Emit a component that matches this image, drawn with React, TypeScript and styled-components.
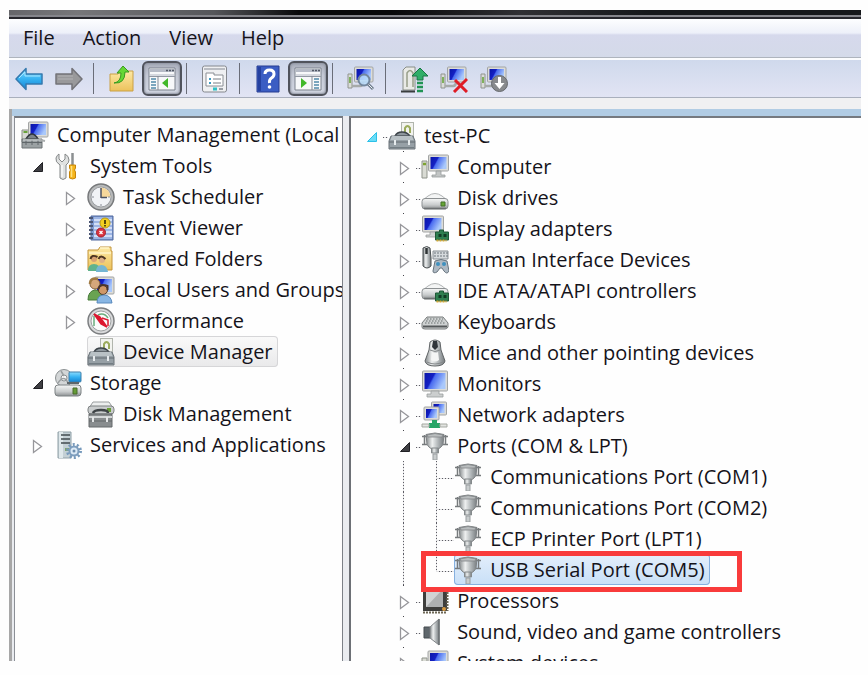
import React from "react";
import styled, { createGlobalStyle, css } from "styled-components";

const Global = createGlobalStyle`
  *, *::before, *::after { box-sizing: border-box; }
  body { margin: 0; background: #fefefe; }
  button { font: inherit; color: inherit; border: 0; background: none; padding: 0; margin: 0; }
`;

/* ---------- layout ---------- */

const Page = styled.main`
  height: 100vh;
  padding: 10px 7px 14px 9px;
  font-family: "Open Sans", "Noto Sans", sans-serif;
  font-size: 20px;
  line-height: 30px;
  color: #15131a;
`;

const Frame = styled.div`
  height: 100%;
  display: flex;
  flex-direction: column;
  overflow: hidden;
  background: #f0f0f2;
`;

const TitleEdge = styled.div`
  flex: none;
  height: 9px;
  background:
    linear-gradient(to bottom, transparent 5px, #85858b 5px, #85858b 7px, #26262c 7px),
    linear-gradient(to right, #66666a 0%, #77777a 8%, #55565a 24%, #08080a 34%, #08080a 45%, #303034 60%, #15171a 75%, #15171a 100%);
`;

const MenuBar = styled.nav`
  flex: none;
  display: flex;
  align-items: center;
  height: 39px;
  background: linear-gradient(to bottom, #fdfeff 0, #edf0f9 14px, #d6d9ec 16px, #d4dae9 100%);
  border-bottom: 1px solid #aeb4bd;
`;

const MenuButton = styled.button`
  padding: 0 14px;
  height: 30px;
`;

const ToolBar = styled.div`
  flex: none;
  display: flex;
  align-items: center;
  height: 40px;
  background: linear-gradient(to bottom, #fbfcfe 2px, #cfd9ec 2px, #e2e4f4 100%);
  border-bottom: 1px solid #a9afbd;
`;

const ToolButton = styled.button<{ $pressed?: boolean }>`
  flex: none;
  width: 40px;
  height: 35px;
  margin-top: 2px;
  display: grid;
  place-items: center;
  ${(p) =>
    p.$pressed &&
    css`
      border: 2px solid #50535c;
      border-radius: 6px;
      background: linear-gradient(to bottom, #a6abb8, #c6cad6 40%, #d3d7e3);
      box-shadow: inset 0 0 2px 1px #9197a5;
    `}
`;

const Separator = styled.span`
  flex: none;
  width: 1px;
  height: 31px;
  margin: 2px 8px 0 4px;
  background: #6a6d78;
`;

const Body = styled.div`
  flex: 1;
  min-height: 0;
  display: flex;
  gap: 6px;
  margin-top: 11px;
  padding: 7px 0 0 5px;
  border-left: 3px solid #a7a7a7;
  background: linear-gradient(to bottom, #b1cce4 7px, #eaecf0 7px);
`;

const Pane = styled.section<{ $side: "left" | "right" }>`
  overflow: hidden;
  background: #fefefe;
  border-top: 2px solid #75797f;
  ${(p) =>
    p.$side === "left"
      ? css`
          flex: 0 0 39%;
          margin-left: -3px;
          padding-left: 6px;
          border-left: 1px solid #8b8f96;
          border-right: 1px solid #7c8087;
        `
      : css`
          flex: 1;
          padding: 1px 0 0 4px;
          border-left: 2px solid #6d7076;
        `}
`;

/* ---------- tree ---------- */

const Tree = styled.ul`
  list-style: none;
  margin: 0;
  padding: 1px 0 0;
`;

const Row = styled.li`
  display: flex;
  height: 31px;
  white-space: nowrap;
`;

const dotsDown = "repeating-linear-gradient(to bottom, #5c5c64 0 1px, #e4e4e6 1px 3px)";
const dotsAcross = "repeating-linear-gradient(to right, #5c5c64 0 1px, #e4e4e6 1px 3px)";

type GuideKind = "none" | "line" | "last" | "branch" | "node" | "stub";

const Guide = styled.span<{ $kind: GuideKind }>`
  flex: none;
  width: 33px;
  height: 31px;
  display: flex;
  align-items: center;
  padding: 3px 0 0 11px;
  background-repeat: no-repeat;
  ${(p) => p.$kind === "line" && css`
    background-image: ${dotsDown};
    background-size: 1px 100%;
    background-position: 15px 0;
  `}
  ${(p) => p.$kind === "branch" && css`
    background-image: ${dotsDown}, ${dotsAcross};
    background-size: 1px 100%, 18px 1px;
    background-position: 15px 0, 15px 17px;
  `}
  ${(p) => p.$kind === "last" && css`
    background-image: ${dotsDown}, ${dotsAcross};
    background-size: 1px 18px, 18px 1px;
    background-position: 15px 0, 15px 17px;
  `}
  ${(p) => p.$kind === "node" && css`
    background-image: linear-gradient(#44444a, #44444a), ${dotsAcross};
    background-size: 1px 1px, 5px 1px;
    background-position: 15px 0, 28px 17px;
  `}
  ${(p) => p.$kind === "stub" && css`
    background-image: ${dotsAcross};
    background-size: 5px 1px;
    background-position: 28px 17px;
  `}
`;

const Expander = styled.button`
  width: 12px;
  height: 15px;
  display: grid;
  place-items: center;
`;

const Item = styled.button<{ $state?: "idle" | "active" }>`
  position: relative;
  display: flex;
  align-items: center;
  gap: 8px;
  height: 31px;
  padding-right: 5px;
  border-radius: 4px;
  ${(p) => p.$state === "idle" && css`
    box-shadow: inset 0 0 0 1px #d6d6d8;
    background: linear-gradient(to bottom, #fafafa, #e9e9ea);
  `}
  ${(p) => p.$state === "active" && css`
    box-shadow: inset 0 0 0 1px #86b0df;
    background: linear-gradient(to bottom, #e4effb, #c8dff7);
  `}
`;

const Highlight = styled.span`
  position: absolute;
  z-index: 1;
  inset: -3px -32px -7px -33px;
  border: 5px solid #f93b3b;
  pointer-events: none;
`;

/* ---------- icons ---------- */

const Svg = ({ children, w = 28, h = 28 }: { children: React.ReactNode; w?: number; h?: number }) => (
  <svg width={w} height={h} viewBox={`0 0 ${w} ${h}`} fill="none" aria-hidden="true">
    {children}
  </svg>
);

const Paints = styled.svg`
  position: absolute;
`;

const Defs = () => (
  <Paints width="0" height="0" aria-hidden="true">
    <defs>
      <linearGradient id="screen" x1="0" y1="0" x2="1" y2="0.4">
        <stop offset="0" stopColor="#0a16a8" />
        <stop offset="0.42" stopColor="#1420c4" />
        <stop offset="0.5" stopColor="#4a6cf0" />
        <stop offset="1" stopColor="#a9c8fb" />
      </linearGradient>
      <linearGradient id="steel" x1="0" y1="0" x2="1" y2="0">
        <stop offset="0" stopColor="#83888a" />
        <stop offset="0.35" stopColor="#eef0f0" />
        <stop offset="0.65" stopColor="#b4b9bb" />
        <stop offset="1" stopColor="#777c7f" />
      </linearGradient>
      <linearGradient id="metal" x1="0" y1="0" x2="0" y2="1">
        <stop offset="0" stopColor="#f6f7f7" />
        <stop offset="0.6" stopColor="#c9cccd" />
        <stop offset="1" stopColor="#8c9092" />
      </linearGradient>
      <linearGradient id="blue" x1="0" y1="0" x2="0" y2="1">
        <stop offset="0" stopColor="#8bdcff" />
        <stop offset="0.5" stopColor="#35b2f2" />
        <stop offset="1" stopColor="#1583d2" />
      </linearGradient>
      <linearGradient id="folder" x1="0" y1="0" x2="0" y2="1">
        <stop offset="0" stopColor="#fde9a4" />
        <stop offset="1" stopColor="#ecc25c" />
      </linearGradient>
    </defs>
  </Paints>
);

const Screen = ({ x, y, w, h }: { x: number; y: number; w: number; h: number }) => (
  <g>
    <rect x={x} y={y} width={w} height={h} rx="1" fill="#dcdcd8" stroke="#a2a4a4" />
    <rect x={x + 2} y={y + 2} width={w - 4} height={h - 4} fill="url(#screen)" />
  </g>
);

const Card = ({ x, y }: { x: number; y: number }) => (
  <g>
    <path d={`M${x} ${y + 2}h4v-2h4v2h5v8h-13z`} fill="#2f7f50" stroke="#1f5937" />
    <path d={`M${x + 3} ${y + 4}h3v3h-3zM${x + 8} ${y + 4}h3v3h-3z`} fill="#113a24" />
    <path d={`M${x + 1} ${y + 10.5}h10`} stroke="#d6a935" strokeWidth="2" strokeDasharray="2 1" />
  </g>
);

const Toolbox = () => (
  <>
    <rect x="13.5" y="0.5" width="12" height="14" fill="#f2f3ef" stroke="#b1b5ad" />
    <path d="M17 11V6q2.500-4 5 0v5" stroke="#9bab5c" strokeWidth="2" />
    <path d="M7 14q2-4 7-4t8 4z" fill="#8d969c" stroke="#3c4348" strokeWidth="1.5" />
    <path d="M3 14h22l2 5v8H1v-8z" fill="#97a0a6" stroke="#6a7379" />
    <path d="M4 14h20l1.500 4h-23z" fill="#b9c1c5" />
    <path d="M1 20h26" stroke="#626b71" />
    <path d="M7 18v5M21 18v5" stroke="#e7ebed" strokeWidth="2" />
    <path d="M2 25.500h24" stroke="#737d83" />
  </>
);

const Plug = () => (
  <>
    <path d="M3.500 3v9M1 4.500h5M1 12.500h5M24.500 3v9M22 4.500h5M22 12.500h5" stroke="#777b7d" strokeWidth="1.5" />
    <path d="M5 2.500q9-3 18 0l-1 10q-2 3-4 4h-8q-2-1-4-4z" fill="url(#steel)" stroke="#7e8284" />
    <path d="M6 3q8-3 16 0l-1 2H7z" fill="#b9bdbe" stroke="#808486" strokeWidth=".8" />
    <path d="M10.500 16h7v5h-7z" fill="url(#steel)" stroke="#858a8c" />
    <path d="M12 22h4v6h-4z" fill="#c9cdce" stroke="#999ea0" />
  </>
);

const Drive = ({ y = 0 }: { y?: number }) => (
  <g transform={`translate(0 ${y})`}>
    <path d="M7 7q7-5 14 0l5 4H2z" fill="#f4f5f5" stroke="#b1b4b5" />
    <rect x="1" y="9.5" width="26" height="10.5" rx="3" fill="url(#metal)" stroke="#8c9092" />
    <path d="M3 19.500h22" stroke="#6d7173" strokeWidth="1.5" />
  </g>
);

const art: Record<string, React.ReactNode> = {
  computerMgmt: (
    <>
      <path d="M1 9h7v12H1z" fill="#d6d8d3" stroke="#8b8f88" />
      <path d="M2.500 11h4" stroke="#69a23a" strokeWidth="2" />
      <Screen x={7.5} y={1} w={19.5} h={15} />
      <path d="M5 18q3-5 6-5t6 5z" fill="#7c8489" stroke="#31363b" strokeWidth="1.5" />
      <path d="M1 18h20v9H1z" fill="#9ba1a3" stroke="#6c7274" />
      <path d="M1 21.500h20M5 19v5M11 19v5M17 19v5" stroke="#60676a" />
      <path d="M2 19h18" stroke="#d7dcdd" />
      <path d="M19 19l5 1" stroke="#a9adae" strokeWidth="2" />
    </>
  ),
  tools: (
    <>
      <path d="M4 2v5l3 3 3-3V2q4 2 4 6 0 3-3 5v13q-3 3-6 0V13Q0 10 1 6q1-3 3-4z" transform="translate(1 0)" fill="#dfe1e1" stroke="#858889" />
      <path d="M8 13v12" stroke="#f8f8f8" strokeWidth="1.5" />
      <path d="M18.500 1v12" stroke="#8b8f91" strokeWidth="2.5" />
      <path d="M15.500 13h6v3l-1 2 1 2v6q-3 2-6 0v-6l1-2-1-2z" fill="#f5b51c" stroke="#c78509" />
      <path d="M17.500 14v11" stroke="#ffe180" strokeWidth="1.5" />
    </>
  ),
  clock: (
    <>
      <circle cx="14" cy="14" r="13" fill="#b8babb" stroke="#77797b" strokeWidth="1.5" />
      <circle cx="14" cy="14" r="10" fill="#f1f3f6" stroke="#9b9ea2" />
      <path d="M14 14V4.500a9.500 9.500 0 0 1 9.500 9.500z" fill="#f6d79a" />
      <path d="M14 5v10M14 14.500h6" stroke="#4c5262" strokeWidth="1.5" />
      <path d="M14 21v2M5 14h2M21 14h2" stroke="#888c95" />
    </>
  ),
  event: (
    <>
      <path d="M4 2h22v24H4z" fill="#7f9bd2" stroke="#4e669c" />
      <path d="M7 3h18v22H7z" fill="#9db5e4" />
      <path d="M7 6h18M7 10h18M7 14h18M7 18h18M7 22h18" stroke="#e4ecfb" strokeWidth="1.5" />
      <path d="M2 4h4M2 8h4M2 12h4M2 16h4M2 20h4M2 24h4" stroke="#4b5674" strokeWidth="1.8" />
      <circle cx="18" cy="9" r="5" fill="#f2cf21" stroke="#b99a12" />
      <path d="M18 6v4M18 11v1.500" stroke="#473d0a" strokeWidth="1.8" />
      <circle cx="14" cy="18.5" r="4.5" fill="#d93340" stroke="#a51f2c" />
      <path d="M12.500 17l3 3M15.500 17l-3 3" stroke="#fff" strokeWidth="1.3" />
    </>
  ),
  shared: (
    <>
      <path d="M1 5h10l2-3h11v4h1v19H1z" fill="url(#folder)" stroke="#c4953b" />
      <path d="M13 3h9M2 8h22" stroke="#fff5c9" strokeWidth="1.5" />
      <circle cx="7" cy="14" r="3" fill="#d7a273" />
      <path d="M3.500 14q1-5 7-2" stroke="#4d3522" strokeWidth="2" />
      <path d="M1 26q0-7 6-7t6 7z" fill="#5fb38d" />
      <circle cx="15" cy="15" r="3" fill="#dfb187" />
      <path d="M11.500 14q2-5 7 0" stroke="#4d3522" strokeWidth="2" />
      <path d="M9 27q0-7 5.500-7t6.500 7z" fill="#75b6d3" />
    </>
  ),
  users: (
    <>
      <Screen x={8} y={1} w={19} h={17} />
      <circle cx="8" cy="8" r="5" fill="#d6a77b" stroke="#85603d" />
      <path d="M3 8q0-7 8-5" stroke="#a17b43" strokeWidth="2.5" />
      <path d="M1 24q0-9 7-10 7 0 8 10z" fill="#69a352" stroke="#477b39" />
      <circle cx="16" cy="14" r="4.5" fill="#cf9868" stroke="#533726" />
      <path d="M11.500 13q1-6 9-3v4" stroke="#4b352b" strokeWidth="2" />
      <path d="M10 27q0-8 7-8t8 8z" fill="#88b6e4" stroke="#5a8abd" />
    </>
  ),
  perf: (
    <>
      <circle cx="14" cy="14" r="13" fill="#d9dadb" stroke="#7c7e80" strokeWidth="1.5" />
      <circle cx="14" cy="14" r="10" fill="#fbfbfb" stroke="#9c9fa0" />
      <path d="M7 19V9M11 8q6-3 10 3" stroke="#6bad7d" strokeWidth="1.5" />
      <path d="M7 7l6 3 7 10-6-3z" fill="#dc1830" stroke="#dc1830" strokeWidth="1.5" />
      <path d="M15 11l6 2v6" stroke="#dc1830" strokeWidth="1.5" />
    </>
  ),
  toolbox: <Toolbox />,
  storage: (
    <>
      <circle cx="10" cy="9" r="8.5" fill="#d3d6d7" stroke="#8b9092" />
      <circle cx="10" cy="9" r="3" fill="#f8f8f8" stroke="#8b9092" />
      <path d="M4 14q6-9 10 0M7 2l3 5" stroke="#9a9fa1" strokeWidth="1.5" />
      <rect x="15" y="3" width="12" height="10" rx="1" fill="url(#blue)" stroke="#3e7fa9" />
      <path d="M13 14h12" stroke="#5e666a" strokeWidth="2" />
      <rect x="1" y="16" width="26" height="11" rx="3" fill="url(#metal)" stroke="#7d8284" />
      <path d="M19 19h4v6h-4z" fill="#659d36" stroke="#49692c" />
    </>
  ),
  disk: (
    <>
      <path d="M6 2h16l4 6H2z" fill="#eceeee" stroke="#9a9e9f" />
      <rect x="1" y="6" width="26" height="8" rx="3" fill="#c9cccd" stroke="#7e8283" />
      <path d="M20 8h4v4h-4z" fill="#6c9e38" />
      <path d="M2 14h23v13H2z" fill="#898d8f" stroke="#64686a" />
      <path d="M6 13q1-3 8-3t7 3" stroke="#3e4346" strokeWidth="2.5" />
      <path d="M2 17h23" stroke="#d4d7d8" strokeWidth="2" />
      <path d="M2 21h23" stroke="#64686a" />
      <path d="M6 17v5M20 17v5" stroke="#e4e6e7" strokeWidth="2" />
    </>
  ),
  services: (
    <>
      <path d="M4 1h13v26H4z" fill="#c4d0d5" stroke="#90a0a7" />
      <path d="M5 1h4v26H5z" fill="#dfe8eb" />
      <path d="M7 4h9M7 8h9M7 12h9" stroke="#414b50" strokeWidth="1.5" />
      <path d="M11 17h4v3h-4z" fill="#7fa56e" />
      <circle cx="20" cy="20" r="6.5" stroke="#779abc" strokeWidth="3" strokeDasharray="2 2.080" />
      <circle cx="20" cy="20" r="4.5" fill="#dbe9f5" stroke="#7d9dbd" strokeWidth="2" />
      <circle cx="20" cy="20" r="1.5" fill="#6e8eae" />
    </>
  ),
  computer: (
    <>
      <path d="M1 8h5v17H1z" fill="#d9dbd4" stroke="#8f938b" />
      <path d="M2 11h3" stroke="#7da331" strokeWidth="2.5" />
      <Screen x={7.5} y={2} w={20} h={16} />
      <path d="M15 18h5v4h4v2H11v-2h4z" fill="#c2c5c5" stroke="#989c9c" strokeWidth=".8" />
    </>
  ),
  drive: (
    <>
      <Drive y={5} />
      <path d="M20 18h4v4h-4z" fill="#66a635" stroke="#45712b" />
    </>
  ),
  display: (
    <>
      <Screen x={1.5} y={1} w={21} h={16} />
      <path d="M9 17h6v3h4v2H5v-2h4z" fill="#d0d3d3" stroke="#999d9d" strokeWidth=".8" />
      <Card x={14.5} y={15} />
    </>
  ),
  hid: (
    <>
      <path d="M12 5h15v8H12z" fill="#d6dadd" stroke="#8a9095" />
      <path d="M13 7h14M13 10h14" stroke="#6e767c" strokeDasharray="2 1" />
      <path d="M2 2q4-3 7 0l1 10v8q-4 4-8 0V8z" fill="url(#steel)" stroke="#494e50" />
      <path d="M5.500 2v6" stroke="#2e3335" strokeWidth="2.5" />
      <path d="M14 15q6-3 12 0l2 10q-2 4-5 0l-2-3h-2l-3 4q-4 2-4-1z" fill="#aeb9c3" stroke="#68747e" />
      <circle cx="17" cy="18" r="2" fill="#3f91bf" />
      <circle cx="23" cy="18" r="2" fill="#3f91bf" />
    </>
  ),
  ide: (
    <>
      <Drive y={2} />
      <Card x={14.5} y={14} />
    </>
  ),
  keyboard: (
    <>
      <path d="M6 9h16l5 6v4q-1 2-3 2H4q-3 0-3-2v-4z" fill="#cfd2d2" stroke="#777b7b" />
      <path d="M6 11h16M5 13h18M4 15h20" stroke="#8b9090" strokeWidth="1.3" strokeDasharray="1.500 1.500" />
      <path d="M2 18.500h24" stroke="#55595a" strokeWidth="2" />
    </>
  ),
  mouse: (
    <>
      <path d="M9 3q5-4 10 0l1 8 4 11q-1 5-10 5T4 22l4-11z" fill="url(#steel)" stroke="#606466" />
      <path d="M12 2h4l1 6-3 3-3-3z" fill="#30353a" />
      <path d="M9 11q5 3 10 0M6 23q8 4 16 0" stroke="#85898b" />
      <path d="M11 13q3 2 6 0l1 8q-4 3-8 0z" fill="#f4f5f5" />
    </>
  ),
  monitor: (
    <>
      <Screen x={1.5} y={1} w={25} h={20} />
      <path d="M10 21h8v3h4v3H6v-3h4z" fill="#cbcece" stroke="#9a9e9e" strokeWidth=".8" />
    </>
  ),
  network: (
    <>
      <Screen x={10.5} y={1} w={15} h={13} />
      <Screen x={3} y={6} w={15} h={13} />
      <path d="M11 19h5v3h3v5H8v-5h3z" fill="#28a567" />
      <path d="M1 23h7v3H1zM19 23h7v3h-7z" fill="#e2e4e1" stroke="#a5a9a2" />
    </>
  ),
  plug: <Plug />,
  cpu: (
    <>
      <path d="M2 2h24v22H2z" fill="#3e3e3c" />
      <path d="M2 25.500h24M26.500 2v22" stroke="#6d6755" strokeWidth="2" strokeDasharray="2 1" />
      <path d="M5 2h17v18H5z" fill="#aeb0b1" />
      <path d="M5 20V2h17z" fill="#d1d3d4" />
      <circle cx="23" cy="22" r="2" fill="#d99a3f" />
    </>
  ),
  sound: (
    <>
      <path d="M3 9h6v11H3z" fill="#5f676c" stroke="#464d51" />
      <path d="M9 9l9-8v26l-9-7z" fill="url(#steel)" stroke="#818588" />
      <path d="M18 1v26" stroke="#6d7275" strokeWidth="1.5" />
    </>
  ),
  system: (
    <>
      <path d="M1 9h5v16H1z" fill="#d9dbd4" stroke="#8f938b" />
      <Screen x={7} y={2} w={20} h={17} />
    </>
  ),
};

const MiniPc = () => (
  <>
    <path d="M1 9h4v14H1z" fill="#dadcd9" stroke="#90948e" />
    <path d="M3 12v6" stroke="#61a332" strokeWidth="1.5" />
    <Screen x={7.5} y={2} w={18.5} h={15} />
    <path d="M5 21h8q3 0 3-4" stroke="#a6aaa9" strokeWidth="2.5" />
  </>
);

const WindowArt = ({ flip }: { flip?: boolean }) => (
  <>
    <path d="M1 3h26v22H1z" fill="#f7f8fa" stroke="#7d838e" />
    <path d="M2 4h24v3H2z" fill="#b5bac6" />
    <path d="M18 5.500h2M21 5.500h2M24 5.500h2" stroke="#525966" strokeWidth="1.5" />
    <path d="M2 9h24v2H2z" fill="#d5d8df" />
    <path d="M1 11.500h26" stroke="#9298a3" />
    {flip ? (
      <>
        <path d="M18 11v14" stroke="#858b97" />
        <path d="M20 14h5M20 17h5M20 20h5M20 23h5" stroke="#5289ab" strokeWidth="1.5" />
        <path d="M7 13l6 5-6 5z" fill="#42b82b" />
      </>
    ) : (
      <>
        <path d="M10 11v14" stroke="#858b97" />
        <path d="M3 14h5M3 17h5M3 20h5M3 23h5" stroke="#5289ab" strokeWidth="1.5" />
        <path d="M20 13l-6 5 6 5z" fill="#42b82b" />
      </>
    )}
  </>
);

const arrowPath = "M1 14L11 3.500V9h16v10H11v5.500z";

type Tool = { label: string; icon?: React.ReactNode; pressed?: boolean; sep?: boolean };

const tools: Tool[] = [
  { label: "Back", icon: <><path d={arrowPath} fill="url(#blue)" stroke="#3579ae" strokeWidth="1.5" strokeLinejoin="round" /><path d="M4 13l6-6v4h15" stroke="#a6e6ff" /></> },
  { label: "Forward", icon: <g transform="translate(28 0) scale(-1 1)"><path d={arrowPath} fill="#99999b" stroke="#737378" strokeWidth="1.5" strokeLinejoin="round" /><path d="M10 11h15M10 14h15" stroke="#b3b3b5" /></g> },
  { label: "s1", sep: true },
  { label: "Up one level", icon: <><path d="M2 9h8l2-3h13v20H2z" fill="url(#folder)" stroke="#caa045" /><path d="M6 18q7-1 7-10H9l6-7 6 6h-4q0 12-11 11z" fill="#65d735" stroke="#399a20" /></> },
  { label: "Show/Hide Console Tree", pressed: true, icon: <WindowArt /> },
  { label: "s2", sep: true },
  { label: "Properties", icon: <><rect x="1.5" y="1" width="24" height="26" rx="2" fill="#eff0f2" stroke="#85888e" /><path d="M3 4h21" stroke="#b9bcc2" strokeWidth="2" /><path d="M5 10V8h8v2h9v11H5z" fill="#fff" stroke="#8a8e94" /><path d="M8 14h2M8 18h2" stroke="#3d9ac2" strokeWidth="2" /><path d="M12 14h8M12 18h8" stroke="#777d84" /><path d="M12 24h4" stroke="#2dc1c6" strokeWidth="3" /><path d="M18 24h4" stroke="#999ea4" strokeWidth="2" /></> },
  { label: "s3", sep: true },
  { label: "Help", icon: <><path d="M3 1h22v26H3z" fill="#3b5dc3" stroke="#263c91" /><path d="M4 2h3v24H4z" fill="#2541a0" /><path d="M11 9q0-4 4.500-4t4.500 4q0 2.500-2.500 4T15.500 18" stroke="#fff" strokeWidth="3" /><circle cx="15.5" cy="22" r="1.8" fill="#fff" /></> },
  { label: "Show/Hide Action Pane", pressed: true, icon: <WindowArt flip /> },
  { label: "s4", sep: true },
  { label: "Scan for hardware changes", icon: <><MiniPc /><circle cx="17" cy="15" r="5.5" fill="#b8dcfa" fillOpacity=".85" stroke="#73879d" strokeWidth="2" /><path d="M21 19l5 5" stroke="#6e7c8b" strokeWidth="3" /><path d="M21.500 19.500l4 4" stroke="#edf1f4" /></> },
  { label: "s5", sep: true },
  { label: "Update driver", icon: <><path d="M3 25V5l3-3h9v23z" fill="#e9eae6" stroke="#898e87" /><path d="M7 22V8q3-5 6 0v14" stroke="#989f89" strokeWidth="1.5" /><path d="M1 26.500h14" stroke="#393d3e" strokeWidth="2" /><path d="M20 3l8 8h-5v4h-6v-4h-5z" fill="#30ae68" stroke="#187644" /><path d="M17 18h6M17 22h6M17 26h6" stroke="#219354" strokeWidth="2.5" /></> },
  { label: "Uninstall", icon: <><MiniPc /><path d="M15 15l12 12M27 14L14 27" stroke="#df1c25" strokeWidth="3" /></> },
  { label: "Disable", icon: <><MiniPc /><circle cx="19.5" cy="18.5" r="8" fill="#888a8d" stroke="#66696d" /><path d="M18 12h3v6h3.500l-5 6-5-6H18z" fill="#fff" /></> },
];

/* ---------- data ---------- */

type Node = {
  label: string;
  icon: string;
  guides: GuideKind[];
  open?: boolean;
  state?: "idle" | "active";
  accent?: boolean;
};

const consoleTree: Node[] = [
  { label: "Computer Management (Local", icon: "computerMgmt", guides: [] },
  { label: "System Tools", icon: "tools", guides: ["none"], open: true },
  ...(
    [
      ["Task Scheduler", "clock"],
      ["Event Viewer", "event"],
      ["Shared Folders", "shared"],
      ["Local Users and Groups", "users"],
      ["Performance", "perf"],
    ] as const
  ).map(([label, icon]): Node => ({ label, icon, guides: ["none", "none"], open: false })),
  { label: "Device Manager", icon: "toolbox", guides: ["none", "none"], state: "idle" },
  { label: "Storage", icon: "storage", guides: ["none"], open: true },
  { label: "Disk Management", icon: "disk", guides: ["none", "none"] },
  { label: "Services and Applications", icon: "services", guides: ["none"], open: false },
];

const device = (label: string, icon: string, open = false): Node => ({ label, icon, guides: ["none", "node"], open });
const port = (label: string): Node => ({ label, icon: "plug", guides: ["none", "line", "branch"] });

const deviceTree: Node[] = [
  { label: "test-PC", icon: "toolbox", guides: ["stub"], open: true, accent: true },
  device("Computer", "computer"),
  device("Disk drives", "drive"),
  device("Display adapters", "display"),
  device("Human Interface Devices", "hid"),
  device("IDE ATA/ATAPI controllers", "ide"),
  device("Keyboards", "keyboard"),
  device("Mice and other pointing devices", "mouse"),
  device("Monitors", "monitor"),
  device("Network adapters", "network"),
  device("Ports (COM & LPT)", "plug", true),
  port("Communications Port (COM1)"),
  port("Communications Port (COM2)"),
  port("ECP Printer Port (LPT1)"),
  { label: "USB Serial Port (COM5)", icon: "plug", guides: ["none", "line", "last"], state: "active" },
  device("Processors", "cpu"),
  device("Sound, video and game controllers", "sound"),
  device("System devices", "system"),
];

const TreeView = ({ name, nodes }: { name: string; nodes: Node[] }) => (
  <Tree role="tree" aria-label={name}>
    {nodes.map((n) => (
      <Row key={n.label} role="treeitem" aria-level={n.guides.length + 1} aria-expanded={n.open} aria-selected={!!n.state}>
        {n.guides.map((g, i) => (
          <Guide key={i} $kind={g}>
            {i === n.guides.length - 1 && n.open !== undefined && (
              <Expander aria-label={`${n.open ? "Collapse" : "Expand"} ${n.label}`}>
                <Svg w={12} h={15}>
                  {n.open ? (
                    <path d="M10.500 2.500v9H1.500z" fill={n.accent ? "#69dcf7" : "#3f3f43"} stroke={n.accent ? "#2cc0e8" : "#202024"} />
                  ) : (
                    <path d="M1.500 1.500v12l8-6z" fill="#fff" stroke="#97979b" strokeWidth="1.3" />
                  )}
                </Svg>
              </Expander>
            )}
          </Guide>
        ))}
        <Item $state={n.state}>
          <Svg>{art[n.icon]}</Svg>
          <span>{n.label}</span>
          {n.state === "active" && <Highlight />}
        </Item>
      </Row>
    ))}
  </Tree>
);

export default function App() {
  return (
    <Page>
      <Global />
      <Defs />
      <Frame>
        <TitleEdge />
        <MenuBar aria-label="Menu">
          {["File", "Action", "View", "Help"].map((m) => (
            <MenuButton key={m}>{m}</MenuButton>
          ))}
        </MenuBar>
        <ToolBar role="toolbar" aria-label="Tools">
          {tools.map((t) =>
            t.sep ? (
              <Separator key={t.label} />
            ) : (
              <ToolButton key={t.label} aria-label={t.label} aria-pressed={t.pressed} $pressed={t.pressed}>
                <Svg>{t.icon}</Svg>
              </ToolButton>
            )
          )}
        </ToolBar>
        <Body>
          <Pane $side="left" aria-label="Console">
            <TreeView name="Console" nodes={consoleTree} />
          </Pane>
          <Pane $side="right" aria-label="Device list">
            <TreeView name="Devices" nodes={deviceTree} />
          </Pane>
        </Body>
      </Frame>
    </Page>
  );
}
